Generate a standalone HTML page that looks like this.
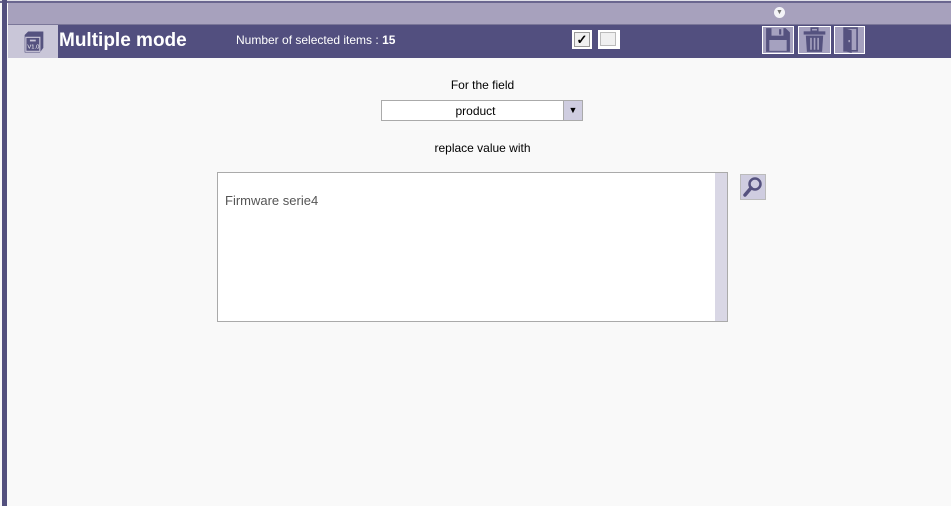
<!DOCTYPE html>
<html><head><style>
body{margin:0;width:951px;height:506px;background:#f9f9f9;font-family:"Liberation Sans",sans-serif;position:relative;overflow:hidden}
div{position:absolute;box-sizing:border-box}
.ib{background:#a5a1bf;border:1px solid #fff;top:26px;height:28px}
</style></head><body>
<div style="left:0;top:0;width:951px;height:1px;background:#e0e0e8"></div>
<div style="left:0;top:1px;width:951px;height:2px;background:#6a668f"></div>
<div style="left:2px;top:0;width:5px;height:506px;background:#53507e"></div>
<div style="left:8px;top:3px;width:943px;height:21px;background:#a7a1bd"></div>
<div style="left:8px;top:24px;width:943px;height:1px;background:#7a7698"></div>
<div style="left:774px;top:7px;width:11px;height:11px;border-radius:50%;background:#f4f4f8;color:#777;font-size:7px;text-align:center;line-height:11px">▼</div>
<div style="left:8px;top:25px;width:943px;height:33px;background:#524f7f"></div>
<div style="left:8px;top:25px;width:50px;height:33px;background:#c9c6d8"></div>
<svg style="position:absolute;left:20px;top:28px" width="28" height="28" viewBox="0 0 24 24"><path d="M4 6 L7 3 H20 L20 17 L17 21 H4 Z" fill="#55527f"/><rect x="5" y="8" width="12" height="12" fill="#55527f" stroke="#c9c6d8" stroke-width="1"/><text x="6.3" y="17.5" font-size="5" fill="#fff" font-family="Liberation Sans">V1.0</text><rect x="8.5" y="10" width="5" height="1.5" fill="#c9c6d8"/></svg>
<div style="left:59px;top:30px;color:#fff;font-weight:bold;font-size:19px">Multiple mode</div>
<div style="left:236px;top:33px;color:#fff;font-size:12px">Number of selected items : <b>15</b></div>
<div style="left:572px;top:30px;width:20px;height:19px;background:#fff;padding:2px"><div style="left:2px;top:2px;width:16px;height:15px;background:#f0f0f0;border:1px solid #999;font-size:13px;line-height:14px;text-align:center;color:#000;font-weight:bold">✓</div></div>
<div style="left:598px;top:30px;width:22px;height:19px;background:#fff;padding:2px"><div style="left:2px;top:2px;width:16px;height:14px;background:#f0f0f0;border:1px solid #bbb"></div></div>
<div class="ib" style="left:762px;width:32px"></div>
<svg style="position:absolute;left:764px;top:27px" width="28" height="26" viewBox="0 0 24 24"><path d="M1 1 H19 L23 5 V23 H1 Z" fill="#55527f"/><rect x="6" y="1" width="11" height="7" fill="#a5a1bf"/><rect x="13" y="2" width="2" height="5" fill="#55527f"/><rect x="4" y="12" width="16" height="10" fill="#a5a1bf"/></svg>
<div class="ib" style="left:798px;width:33px"></div>
<svg style="position:absolute;left:801px;top:27px" width="27" height="26" viewBox="0 0 24 24"><rect x="2" y="4" width="20" height="3" fill="#55527f"/><rect x="9" y="1" width="6" height="3" fill="none" stroke="#55527f" stroke-width="1.5"/><path d="M4 8 H20 L19 23 H5 Z" fill="#55527f"/><rect x="8" y="10" width="1.5" height="11" fill="#a5a1bf"/><rect x="11.3" y="10" width="1.5" height="11" fill="#a5a1bf"/><rect x="14.6" y="10" width="1.5" height="11" fill="#a5a1bf"/></svg>
<div class="ib" style="left:834px;width:31px"></div>
<svg style="position:absolute;left:836px;top:27px" width="27" height="26" viewBox="0 0 24 24"><path d="M7 1 H19 V22 H7 Z" fill="none" stroke="#55527f" stroke-width="1.5"/><path d="M7 1 L14 3 V24 L7 22 Z" fill="#55527f"/><rect x="11" y="12" width="1.5" height="2" fill="#a5a1bf"/></svg>
<div style="left:0;top:78px;width:965px;text-align:center;font-size:12px;color:#000">For the field</div>
<div style="left:381px;top:100px;width:202px;height:21px;background:#fff;border:1px solid #aaa"></div>
<div style="left:381px;top:104px;width:189px;text-align:center;font-size:12px">product</div>
<div style="left:563px;top:101px;width:19px;height:19px;background:#cfcde0;border-left:1px solid #aaa;font-size:9px;text-align:center;line-height:19px">▼</div>
<div style="left:0;top:141px;width:965px;text-align:center;font-size:12px">replace value with</div>
<div style="left:217px;top:172px;width:511px;height:150px;background:#fff;border:1px solid #aaa"></div>
<div style="left:715px;top:173px;width:12px;height:148px;background:#d9d7e5"></div>
<div style="left:225px;top:193px;font-size:13px;color:#555">Firmware serie4</div>
<div style="left:740px;top:174px;width:26px;height:26px;background:#cfcde0;border:1px solid #bbb"></div>
<svg style="position:absolute;left:741px;top:175px" width="24" height="24" viewBox="0 0 24 24"><circle cx="14" cy="9" r="5.5" fill="none" stroke="#55527f" stroke-width="2.5"/><path d="M10 13 L4 20" stroke="#55527f" stroke-width="3.5" stroke-linecap="round"/></svg>
</body></html>
